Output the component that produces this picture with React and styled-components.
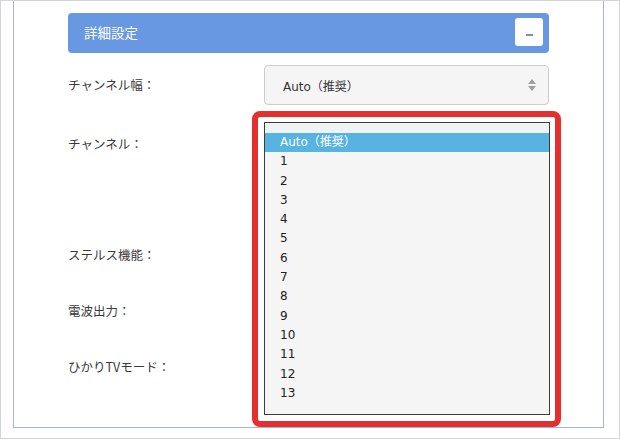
import styled, { createGlobalStyle } from "styled-components"

const GlobalStyle = createGlobalStyle`
    body {
        margin: 0;
        background: #FFFFFF;
        font-family: "Noto Sans CJK JP", "DejaVu Sans", sans-serif;
    }
`

const canais = ['1', '2', '3', '4', '5', '6', '7', '8', '9', '10', '11', '12', '13']

export default function App() {
    return (
        <>
            <GlobalStyle />
            <Frame>
                <Panel>
                    <Header>
                        <span>詳細設定</span>
                        <Toggle><i /></Toggle>
                    </Header>
                    <Row h={59}>
                        <Label>チャンネル幅：</Label>
                        <Select>
                            <span>Auto（推奨）</span>
                            <Arrows>
                                <b className="up" />
                                <b className="down" />
                            </Arrows>
                        </Select>
                    </Row>
                    <Row h={111}>
                        <Label>チャンネル：</Label>
                        <Cell>
                            <Destaque>
                                <Lista>
                                    <Topo />
                                    <Opcao ativo>Auto（推奨）</Opcao>
                                    {canais.map(c => <Opcao key={c}>{c}</Opcao>)}
                                </Lista>
                            </Destaque>
                        </Cell>
                    </Row>
                    <Row h={56}>
                        <Label>ステルス機能：</Label>
                    </Row>
                    <Row h={56}>
                        <Label>電波出力：</Label>
                    </Row>
                    <Row h={56}>
                        <Label>ひかりTVモード：</Label>
                    </Row>
                </Panel>
            </Frame>
        </>
    )
}

const Frame = styled.div`
    width: 620px;
    height: 439px;
    box-sizing: border-box;
    border: 1px solid #D4D4D4;
    background: #FFFFFF;
    padding: 0 15px 10px 12px;
`
const Panel = styled.div`
    width: 591px;
    height: 427px;
    box-sizing: border-box;
    border: 1px solid #A3B7D2;
    border-top: none;
    padding: 12px 0 0 54px;
`
const Header = styled.div`
    width: 481px;
    height: 40px;
    box-sizing: border-box;
    background: #6898E2;
    border-radius: 4px;
    display: flex;
    align-items: center;
    justify-content: space-between;
    padding: 0 6px 2px 16px;
    margin-bottom: 4px;
    span {
        color: #FFFFFF;
        font-size: 13.5px;
    }
`
const Toggle = styled.div`
    width: 28px;
    height: 28px;
    background: #FFFFFF;
    border-radius: 3px;
    display: flex;
    align-items: center;
    justify-content: center;
    i {
        width: 7px;
        height: 2px;
        margin-top: 6px;
        background: #7D90B0;
    }
`
const Row = styled.div`
    display: grid;
    grid-template-columns: 196px 285px;
    align-items: start;
    height: ${props => props.h}px;
`
const Label = styled.div`
    height: 56px;
    line-height: 56px;
    font-size: 12.5px;
    color: #3A3A3A;
`
const Select = styled.div`
    margin-top: 8px;
    height: 40px;
    box-sizing: border-box;
    background: #F5F5F5;
    border: 1px solid #CCCCCC;
    border-radius: 4px;
    display: flex;
    align-items: center;
    justify-content: space-between;
    padding: 0 12px 0 18px;
    span {
        font-family: "DejaVu Sans", "Noto Sans CJK JP", sans-serif;
        font-size: 12px;
        color: #333333;
    }
`
const Arrows = styled.div`
    display: flex;
    flex-direction: column;
    gap: 2px;
    b {
        width: 0;
        height: 0;
        border-left: 4px solid transparent;
        border-right: 4px solid transparent;
    }
    .up {
        border-bottom: 5px solid #A0A0A0;
    }
    .down {
        border-top: 5px solid #A0A0A0;
    }
`
const Cell = styled.div`
    position: relative;
    height: 56px;
`
const Destaque = styled.div`
    position: absolute;
    left: -12px;
    top: -5px;
    z-index: 2;
    width: 309px;
    height: 316px;
    box-sizing: border-box;
    border: 6px solid #E52E2E;
    border-radius: 8px;
    background: #FFFFFF;
    padding: 5px 5px 6px 6px;
`
const Lista = styled.div`
    height: 100%;
    box-sizing: border-box;
    border: 1px solid #3C3C3C;
    background: #F5F5F5;
`
const Topo = styled.div`
    height: 10px;
    background: #EEF3F3;
`
const Opcao = styled.div`
    height: 19.3px;
    line-height: 19.3px;
    padding-left: 15px;
    font-family: "DejaVu Sans", "Noto Sans CJK JP", sans-serif;
    font-size: 12px;
    color: ${props => props.ativo ? "#FFFFFF" : "#222222"};
    background: ${props => props.ativo ? "#58B3E3" : "transparent"};
`
